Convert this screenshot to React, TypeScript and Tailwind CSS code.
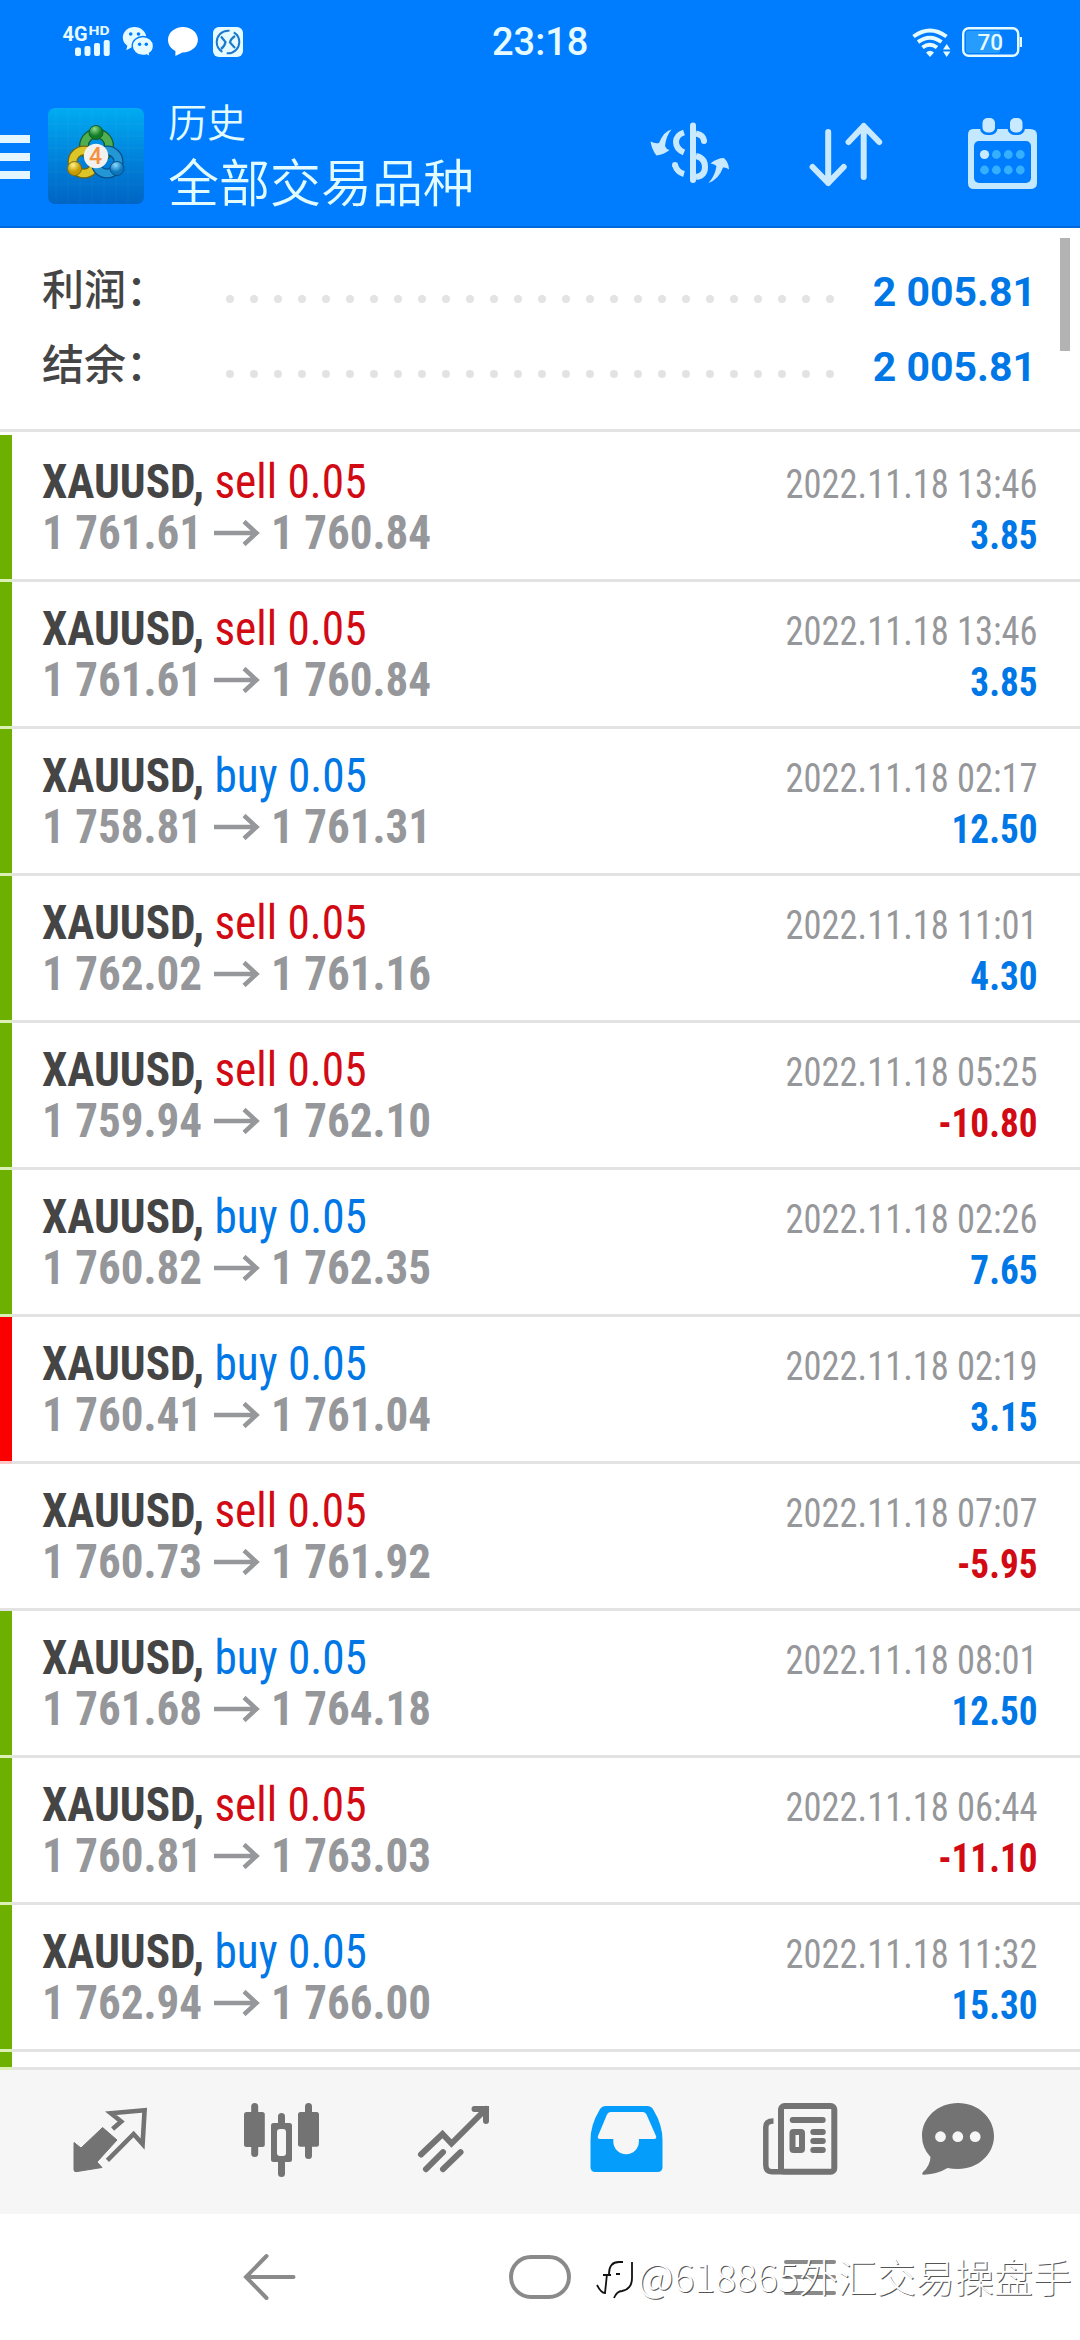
import React from 'react'

const deals = [
  { type: 'sell', open: '1 761.61', close: '1 760.84', time: '2022.11.18 13:46', profit: '3.85', mark: 'green' },
  { type: 'sell', open: '1 761.61', close: '1 760.84', time: '2022.11.18 13:46', profit: '3.85', mark: 'green' },
  { type: 'buy', open: '1 758.81', close: '1 761.31', time: '2022.11.18 02:17', profit: '12.50', mark: 'green' },
  { type: 'sell', open: '1 762.02', close: '1 761.16', time: '2022.11.18 11:01', profit: '4.30', mark: 'green' },
  { type: 'sell', open: '1 759.94', close: '1 762.10', time: '2022.11.18 05:25', profit: '-10.80', mark: 'green' },
  { type: 'buy', open: '1 760.82', close: '1 762.35', time: '2022.11.18 02:26', profit: '7.65', mark: 'green' },
  { type: 'buy', open: '1 760.41', close: '1 761.04', time: '2022.11.18 02:19', profit: '3.15', mark: 'red' },
  { type: 'sell', open: '1 760.73', close: '1 761.92', time: '2022.11.18 07:07', profit: '-5.95', mark: 'none' },
  { type: 'buy', open: '1 761.68', close: '1 764.18', time: '2022.11.18 08:01', profit: '12.50', mark: 'green' },
  { type: 'sell', open: '1 760.81', close: '1 763.03', time: '2022.11.18 06:44', profit: '-11.10', mark: 'green' },
  { type: 'buy', open: '1 762.94', close: '1 766.00', time: '2022.11.18 11:32', profit: '15.30', mark: 'green' },
]

const markColor = {
  green: 'bg-[#6eb000]',
  red: 'bg-[#fb0000]',
  none: 'bg-white',
}

const markLine = {
  green: 'bg-[#dcefb4]',
  red: 'bg-[#ffc8c8]',
  none: 'bg-[#e3e3e3]',
}

const StatusBar = () => (
  <div className="flex h-[84px] items-center text-[#e6fbff]">
    <svg className="ml-[60px]" width="190" height="44" viewBox="60 20 190 44" fill="currentColor">
      <text x="62.5" y="40.5" fontSize="21" fontWeight="700" fontFamily="Roboto, sans-serif" textLength="25" lengthAdjust="spacingAndGlyphs">4G</text>
      <text x="88.5" y="35" fontSize="13.5" fontWeight="700" fontFamily="Roboto, sans-serif" textLength="21" lengthAdjust="spacingAndGlyphs">HD</text>
      <rect x="75" y="47.5" width="6" height="8.5" rx="2" />
      <rect x="84.5" y="46" width="6" height="10" rx="2" />
      <rect x="94" y="43" width="6" height="13" rx="2" />
      <rect x="103.7" y="40" width="6" height="16" rx="2" />
      {/* wechat */}
      <path d="M134.500 27c-6.500 0-11.700 4.700-11.700 10.600 0 3.400 1.700 6.300 4.500 8.200l-1 4.400 5-2.700c1 .3 2.200.4 3.200.4 6.600 0 11.800-4.600 11.800-10.300S141 27 134.500 27z" />
      <path d="M143 36.500c-6 0-10.800 4.200-10.800 9.400S137 55.500 143 55.500c1.300 0 2.600-.2 3.700-.6l3.600 2-.8-3.500c2.600-1.800 4-4.400 4-7.500 0-5.200-4.600-9.400-10.500-9.400z" stroke="#007dff" strokeWidth="1.400" />
      <g fill="#007dff">
        <circle cx="130.700" cy="34" r="1.800" />
        <circle cx="138.500" cy="34" r="1.800" />
        <circle cx="139.600" cy="44.200" r="1.700" />
        <circle cx="146.300" cy="44.200" r="1.700" />
      </g>
      <path fill="#fff" d="M183 27c-8.300 0-15 5.500-15 12.800 0 5 3 9 7.400 11.200v5l7-3.500c8.600 0 15.500-5.500 15.500-12.700S191.300 27 183 27z" />
      <rect x="213" y="27" width="30" height="30" rx="6" />
      <circle cx="228" cy="42" r="11.300" fill="none" stroke="#1c78cf" strokeWidth="2" strokeDasharray="31 4.500" strokeDashoffset="12" />
      <path d="M221 36.500l4.500 5.500q-.5 4-4.500 7M235 36q-4.500 3-5 6.500l5 5.500" fill="none" stroke="#1c78cf" strokeWidth="2.200" />
    </svg>
    <span className="ml-[242px] w-[98px] text-[38px] leading-[44px] font-medium">23:18</span>
    <svg className="ml-[318px]" width="120" height="36" viewBox="906 24 120 36" fill="none" stroke="currentColor">
      <path d="M911.500 36.500q16.500-12 33 0M916 42q12-8.600 23.500 0M920.500 47.500q7.200-5.500 14.500 0" strokeWidth="4" />
      <path d="M924 52.500q4-3.500 8 0l-4 4.500z" fill="currentColor" stroke="none" />
      <path d="M941 49.500l3.700-5.500 3.700 5.500zM941 51.500h7.400l-3.700 5.500z" fill="currentColor" stroke="none" />
      <rect x="961.200" y="28.200" width="55" height="27.600" rx="5.500" strokeWidth="2.400" />
      <rect x="964" y="31" width="34" height="22" rx="2" fill="#279cff" stroke="none" />
      <path d="M1018.800 37v10" strokeWidth="2.400" />
      <text x="975.500" y="50" fontSize="22.500" fontWeight="500" fontFamily="Roboto, sans-serif" fill="currentColor" stroke="none">70</text>
    </svg>
  </div>
)

const AppLogo = () => (
  <svg width="96" height="96" viewBox="0 0 96 96">
    <defs>
      <linearGradient id="logoBg" x1="0" y1="0" x2="0" y2="1">
        <stop offset="0" stopColor="#00acf2" />
        <stop offset="0.5" stopColor="#0084dc" />
        <stop offset="1" stopColor="#0065c4" />
      </linearGradient>
      <radialGradient id="logoGreen" cx="0.4" cy="0.25">
        <stop offset="0" stopColor="#8fdd8b" />
        <stop offset="1" stopColor="#117c27" />
      </radialGradient>
      <radialGradient id="logoYellow" cx="0.4" cy="0.25">
        <stop offset="0" stopColor="#fdf28c" />
        <stop offset="1" stopColor="#c89c00" />
      </radialGradient>
      <radialGradient id="logoBlue" cx="0.4" cy="0.25">
        <stop offset="0" stopColor="#8bdcff" />
        <stop offset="1" stopColor="#0b76bd" />
      </radialGradient>
    </defs>
    <rect width="96" height="96" rx="7" fill="url(#logoBg)" />
    <path d="M8 0v96M20 0v96M32 0v96M44 0v96M56 0v96M68 0v96M80 0v96M0 16h96M0 28h96M0 40h96M0 52h96M0 64h96M0 76h96" stroke="#fff" strokeOpacity="0.040" />
    <g fill="none">
      <circle cx="48.500" cy="38" r="12.500" stroke="#125c2a" strokeWidth="10" />
      <circle cx="48.500" cy="38" r="12.500" stroke="#4fae50" strokeWidth="7.500" />
      <circle cx="36" cy="54" r="11.500" stroke="#6f6411" strokeWidth="10" />
      <circle cx="36" cy="54" r="11.500" stroke="#dcc526" strokeWidth="7.500" />
      <circle cx="59" cy="54" r="11.500" stroke="#0a4f88" strokeWidth="10" />
      <circle cx="59" cy="54" r="11.500" stroke="#2397d6" strokeWidth="7.500" />
    </g>
    <circle cx="48" cy="24.500" r="7" fill="url(#logoGreen)" stroke="#125c2a" />
    <circle cx="26.500" cy="60.500" r="7" fill="url(#logoYellow)" stroke="#806c10" />
    <circle cx="69" cy="60.500" r="7" fill="url(#logoBlue)" stroke="#0a4f88" />
    <circle cx="48" cy="48" r="12.200" fill="#f3f1ef" />
    <text x="47.500" y="56" fontSize="23" fontWeight="500" fontFamily="Roboto, sans-serif" textAnchor="middle" fill="#f5913e">4</text>
  </svg>
)

const Toolbar = () => (
  <div className="flex h-[144px] items-center border-b-2 border-[#0069dc]">
    <div className="flex w-[30px] flex-col gap-[10px] pt-1">
      <div className="h-2 bg-[#e4f6ff]" />
      <div className="h-2 bg-[#e4f6ff]" />
      <div className="h-2 bg-[#e4f6ff]" />
    </div>
    <div className="ml-[18px] pt-[2px]">
      <AppLogo />
    </div>
    <div className="ml-[24px] pb-1 font-['Noto_Sans_CJK_SC',sans-serif] font-[350] text-[#e2fbff]">
      <div className="text-[39px] leading-[54px]">历史</div>
      <div className="text-[51px] leading-[66px]">全部交易品种</div>
    </div>
    <svg className="ml-auto" width="130" height="92" viewBox="0 0 130 92" fill="none" stroke="#c9e9ff" strokeWidth="6">
      <path d="M53 16.500V71" strokeLinecap="round" />
      <path d="M44 23.500Q36 26 36 33t8 10.500M56 24.500Q64 26 64 32.500" />
      <path d="M64 32h.01M35 56h.01" strokeLinecap="round" />
      <path d="M35 56Q37 63 44 65M56 47Q65 49 65 58T56 68" />
      <path d="M31.500 20.500Q24 22 19 34Q15 35 10.500 32.500Q12 41 16.500 46.500Q24 45.500 29.500 41Q26 40 25 37Q26 27 31.500 20.500z" fill="#c9e9ff" stroke="none" />
      <path d="M68.500 74Q79 70 83 58.500Q86 58 89 60.500Q89 54 84 49Q77 49 70.500 54.500Q74 54.500 76.500 57Q75 67 68.500 74z" fill="#c9e9ff" stroke="none" />
    </svg>
    <svg className="ml-[30px]" width="92" height="92" viewBox="0 0 92 92" fill="none" stroke="#c9e9ff" strokeWidth="6" strokeLinecap="round" strokeLinejoin="round">
      <path d="M28.200 23v51M12.600 58l15.600 16 15.500-16M63.700 68V17M48.600 33l15.100-16 15.500 16" />
    </svg>
    <svg className="mr-[34px] ml-[68px]" width="86" height="92" viewBox="0 0 86 92">
      <path d="M13 20h57q7 0 7 6v48q0 6-7 6H14q-6 0-6-6V26q0-6 5-6z" fill="#c4e9ff" />
      <rect x="20" y="6" width="17.500" height="20" rx="7" fill="#007dff" />
      <rect x="47.500" y="6" width="17.500" height="20" rx="7" fill="#007dff" />
      <rect x="22.500" y="9" width="12.500" height="14.500" rx="5" fill="#c9e9ff" />
      <rect x="50" y="9" width="12.500" height="14.500" rx="5" fill="#c9e9ff" />
      <rect x="14" y="32" width="57" height="42" rx="5" fill="#007dff" />
      <circle cx="24.500" cy="45.500" r="4.600" fill="#c9e9ff" />
      <g fill="#35b0ff">
        <circle cx="36.400" cy="45.500" r="4.400" />
        <circle cx="48.300" cy="45.500" r="4.400" />
        <circle cx="60.300" cy="45.500" r="4.400" />
        <circle cx="24.500" cy="61" r="4.400" />
        <circle cx="36.400" cy="61" r="4.400" />
        <circle cx="48.300" cy="61" r="4.400" />
        <circle cx="60.300" cy="61" r="4.400" />
      </g>
    </svg>
  </div>
)

const SummaryRow = ({ label, value }) => (
  <div className="flex h-[75px] items-center justify-between pr-[44px] pl-[42px]">
    <span className="w-[184px] pb-[9px] font-['Noto_Sans_CJK_SC',sans-serif] text-[42px] leading-[60px] font-medium text-[#454545]">{label}</span>
    <span className="mt-[15px] flex gap-4">
      {Array.from({ length: 26 }).map((_, i) => (
        <i key={i} className="size-2 rounded-full bg-[#e3e3e3]" />
      ))}
    </span>
    <span className="ml-auto text-[41px] leading-[60px] font-bold text-[#0077e6]">{value}</span>
  </div>
)

const DealRow = ({ deal }) => (
  <div>
    <div className="flex h-[144px]">
      <div className={`w-3 ${markColor[deal.mark]}`} />
      <div className="flex flex-1 justify-between pr-[42px] pl-[30px] font-['Roboto_Condensed',Roboto,sans-serif] font-stretch-condensed whitespace-nowrap">
        <div className="pt-[21px] text-[48px] leading-[51px]">
          <p className="origin-left scale-x-[0.943]">
            <span className="font-bold text-[#454545]">XAUUSD, </span>
            <span className={deal.type === 'sell' ? 'text-[#d20a14]' : 'text-[#0077e6]'}>{deal.type} 0.05</span>
          </p>
          <p className="flex items-center font-bold text-[#96979a]">
            <span className="w-[172px]">
              <span className="inline-block origin-left scale-x-[0.938]">{deal.open}</span>
            </span>
            <svg width="46" height="26" viewBox="0 0 46 26" fill="none" stroke="currentColor" strokeWidth="4.500">
              <path d="M0 13h43M30 1.500L42.500 13L30 24.500" />
            </svg>
            <span className="ml-[11px] origin-left scale-x-[0.938]">{deal.close}</span>
          </p>
        </div>
        <div className="pt-6 text-right text-[40px] leading-[51px]">
          <p className="origin-right scale-x-[0.911] text-[#96979a]">{deal.time}</p>
          <p className={`origin-right scale-x-[0.93] font-bold ${deal.profit.startsWith('-') ? 'text-[#d20a14]' : 'text-[#0077e6]'}`}>{deal.profit}</p>
        </div>
      </div>
    </div>
    <div className="flex h-[3px] bg-[#e3e3e3]">
      <div className={`w-3 ${markLine[deal.mark]}`} />
    </div>
  </div>
)

const TabBar = () => (
  <div className="flex h-[144px] items-center bg-[#f6f6f6] px-6 text-[#737373] *:flex *:flex-1 *:justify-center">
    <div>
      <svg width="100" height="100" viewBox="0 0 100 100">
        <path d="M14 50.500l7 5.500 21.600-20.500L57 48 37 70l5 5.500-26 4.200q-2 0-2-2z" fill="currentColor" stroke="currentColor" strokeLinejoin="round" />
        <path d="M52.600 37l8.600-7.500-10.300-8.200 33.700-3-2 33.700-9-10-26.200 26.300" fill="none" stroke="currentColor" strokeWidth="4.600" />
      </svg>
    </div>
    <div>
      <svg width="100" height="100" viewBox="0 0 100 100" fill="currentColor">
        <rect x="12" y="20" width="20.800" height="35" rx="2.500" />
        <rect x="19.200" y="11" width="7" height="54" rx="3.500" />
        <rect x="46" y="21" width="7" height="64" rx="3.500" />
        <rect x="39" y="31" width="21" height="39" rx="2.500" />
        <rect x="45" y="37" width="9" height="27" rx="3" fill="#f6f6f6" />
        <rect x="66" y="20" width="21" height="34.700" rx="2.500" />
        <rect x="73" y="11" width="7" height="56" rx="3.500" />
      </svg>
    </div>
    <div>
      <svg width="100" height="100" viewBox="0 0 100 100" fill="none" stroke="currentColor" strokeWidth="6" strokeLinecap="round">
        <path d="M17 62.500l21.500-20.500 9 9.500 34.500-34.500M70.500 17H82v12" />
        <path d="M22 77.200l17-17M39 77.200l17.500-17" />
      </svg>
    </div>
    <div>
      <svg width="100" height="100" viewBox="0 0 100 100">
        <path fill="#049dfc" fillRule="evenodd" d="M30 14h41q4.500 0 6.500 4 9 15 9 30v27q0 5-5 5h-62q-5 0-5-5V48q0-15 9-30 2-4 6.500-4zM34.500 20q-2.500 0-3.500 2.500L22 44q-1 3 2 3h13.300v2.500a12.800 12.800 0 0 0 25.600 0V47H78q3 0 2-3l-9.500-21.500q-1-2.500-3.500-2.500z" />
      </svg>
    </div>
    <div>
      <svg width="100" height="100" viewBox="0 0 100 100" fill="none" stroke="currentColor" strokeWidth="6">
        <path d="M25.500 29q-7.700 0-7.700 6v38q0 6.700 6 6.700h12" strokeWidth="5.500" />
        <rect x="33" y="14" width="53.300" height="65.700" rx="3.500" />
        <path d="M44.700 28h30M65.300 40h9.500M65.300 49h9.500M65.300 58h9.500" strokeLinecap="round" />
        <rect x="44.500" y="40" width="9.500" height="18" rx="1" />
      </svg>
    </div>
    <div>
      <svg width="100" height="100" viewBox="0 0 100 100">
        <path d="M38 11C18 11 2 25.500 2 44q0 12 8.500 21-.5 9-7.500 15-2 3 1 2.700Q18 82 27.500 76q5 1 10.500 1c20 0 36-14.700 36-33S58 11 38 11z" fill="currentColor" />
        <circle cx="20.500" cy="44.700" r="5.400" fill="#f6f6f6" />
        <circle cx="37.800" cy="44.700" r="5.400" fill="#f6f6f6" />
        <circle cx="55.200" cy="44.700" r="5.400" fill="#f6f6f6" />
      </svg>
    </div>
  </div>
)

const SystemNav = () => (
  <div className="relative flex h-[126px] items-center bg-white px-[135px] text-[#8a8a8a] *:flex-1">
    <svg height="50" viewBox="-27 -25 54 50" fill="none" stroke="currentColor" strokeWidth="4" strokeLinecap="round">
      <path d="M23.500 0H-24M-3.500-21L-24 0L-3.500 21" />
    </svg>
    <div className="flex justify-center">
      <div className="h-11 w-[62px] flex-none rounded-full border-4 border-[#8a8a8a]" />
    </div>
    <svg height="50" viewBox="-27 -25 54 50" fill="none" stroke="currentColor" strokeWidth="4" strokeLinecap="round">
      <path d="M-24-15h48M-24 0h48M-24 16h48" />
    </svg>
    {/* watermark over the system buttons */}
    <div className="absolute top-[31px] left-[596px] flex items-center text-white">
      <svg width="42" height="60" viewBox="0 0 42 60" fill="none" stroke="#111" strokeWidth="1.800">
        <path d="M1 40q4 8 8 8l2-19M7 30h8M13 29q0-12 10-12h4M20 29h4M36 17v16q0 11-10 13-5 0-8 7" />
      </svg>
      <span className="font-['Noto_Sans_CJK_SC',sans-serif] text-[39px] leading-[60px] font-light whitespace-nowrap [text-shadow:1px_1px_0_#555]">@618865外汇交易操盘手</span>
    </div>
  </div>
)

const App = () => {
  return (
    <div className="flex h-[2340px] w-[1080px] flex-col overflow-hidden bg-white font-['Roboto','Noto_Sans_CJK_SC',sans-serif]">
      <div className="bg-[#007dff]">
        <StatusBar />
        <Toolbar />
      </div>
      <div className="relative h-[1839px] overflow-hidden">
        <div className="mb-[3px] h-[204px] border-b-[3px] border-[#e3e3e3] pt-[26px]">
          <SummaryRow label="利润：" value="2 005.81" />
          <SummaryRow label="结余：" value="2 005.81" />
        </div>
        {deals.map((deal, i) => (
          <DealRow key={i} deal={deal} />
        ))}
        <div className="h-[15px] w-3 bg-[#6eb000]" />
        <div className="absolute top-[10px] right-[10px] h-[113px] w-[10px] bg-[#b3b3b3]" />
      </div>
      <div className="flex h-[3px] bg-[#e3e3e3]">
        <div className="w-3 bg-[#dcefb4]" />
      </div>
      <TabBar />
      <SystemNav />
    </div>
  )
}

export default App
